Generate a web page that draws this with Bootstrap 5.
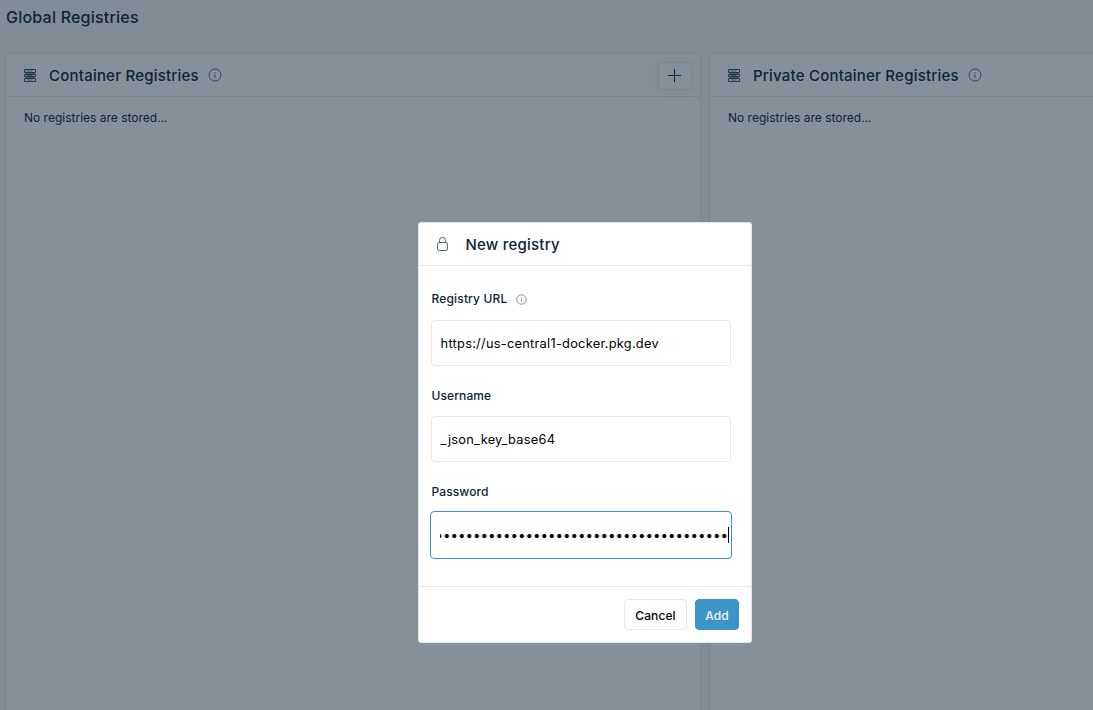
<!DOCTYPE html>
<html lang="en">
<head>
<meta charset="utf-8">
<meta name="viewport" content="width=device-width, initial-scale=1">
<title>Global Registries</title>
<link href="https://cdn.jsdelivr.net/npm/bootstrap@5.3.0/dist/css/bootstrap.min.css" rel="stylesheet">
<style>
body{font-family:Inter,sans-serif;font-size:12px;line-height:18px;color:#0d2436;background:#808d96;height:710px}
.page-title{font-size:16px;font-weight:450;line-height:20px;letter-spacing:.22px;padding:7px 0 0 6px;height:53px}
.boards{padding-left:5px;gap:8px;height:657px}
.panel{width:696px;background:#84919a;border:1px solid #7a8790;border-bottom:0;border-radius:5px 5px 0 0}
.panel-last{width:auto;min-width:0;border-right:0;border-top-right-radius:0}
.panel-top{height:43px;border-bottom:1px solid #7a8790;padding:0 8px 0 18px}
.panel-title,.dialog-title{font-size:15px;font-weight:450;line-height:20px;letter-spacing:.22px}
.panel-title{margin-left:13px;padding-top:1px}
.panel-text{padding:12px 18px}
.add-btn{width:34px;height:28px;border:1px solid #7a8790;border-radius:3px;box-shadow:0 0 14px rgba(30,50,65,.07);background:#84919a;margin-top:1px}
.add-btn svg{margin-right:1px}
svg{display:block;flex:none}
.info-lg{color:#33495a;margin-left:9px}
.info-sm{color:#657581;margin-left:9px}
.dialog{position:absolute;left:418px;top:222px;width:334px;height:421px;background:#fff;border:1px solid #e3e6e8;border-radius:3px}
.dialog-top{height:43px;border-bottom:1px solid #e6e8ea;padding-left:16px}
.dialog-title{margin-left:15.5px;padding-top:2px}
.dialog-main{height:321px;padding:24px 20px 0 12px;border-bottom:1px solid #e6e8ea}
.field-label{font-weight:450;line-height:18px;height:18px;margin:0 0 11px .6px;letter-spacing:.08px}
.field-label.with-info{margin-bottom:12px;letter-spacing:.14px}
.field{height:46px;width:300px;border:1px solid #e6e8ea;border-radius:4px;font-size:12.8px;letter-spacing:.27px;color:#000;padding:1px 9px 0 8.6px;margin-bottom:21px;background:#fff}
.field.active{width:302px;height:48px;margin:-1px 0 0 -1px;border-color:#3d94c7;padding:0 2px 0 9px;font-size:13.333px;letter-spacing:0}
.dots{overflow:hidden;white-space:nowrap;height:18px;width:288px}
.caret{width:1px;height:16px;background:#000}
.act{height:31px;border-radius:4px;font-size:12px;font-weight:450;padding:2px 0 0;border:1px solid #e6e8ea;color:#000;letter-spacing:.1px}
.act-cancel{width:63px}
.act-add{width:44px;background:#3d94c7;border-color:#3d94c7;color:#eef5fa}
</style>
</head>
<body class="overflow-hidden position-relative">
<svg width="0" height="0" class="position-absolute">
<symbol id="rack" viewBox="0 0 12 13"><g fill="none" stroke="#203748"><path d="M.5 .5h11v3H.5zM.5 5.5h11v2H.5zM.5 9.5h11v3H.5z"/><path d="M1 4.5h10M1 8.5h10M2.5 2h6M2.5 6.5h6M2.5 11h6" stroke-opacity=".6"/></g></symbol>
<symbol id="info" viewBox="0 0 14 14"><g fill="none" stroke="currentColor"><circle cx="7" cy="7" r="6"/><path d="M7 6v4M7 4v1"/></g></symbol>
</svg>
<h1 class="page-title m-0">Global Registries</h1>
<main class="boards d-flex">
<section class="panel flex-shrink-0">
<div class="panel-top d-flex align-items-center"><svg width="12" height="13"><use href="#rack"/></svg><h2 class="panel-title mb-0">Container Registries</h2><svg class="info-lg" width="14" height="14"><use href="#info"/></svg>
<button class="btn add-btn p-0 ms-auto d-flex align-items-center justify-content-center" aria-label="Add registry"><svg width="13" height="13"><path d="M6.5 0v13M0 6.5h13" stroke="#0b2234"/></svg></button></div>
<div class="panel-text">No registries are stored...</div>
</section>
<section class="panel panel-last flex-grow-1">
<div class="panel-top d-flex align-items-center"><svg width="12" height="13"><use href="#rack"/></svg><h2 class="panel-title mb-0">Private Container Registries</h2><svg class="info-lg" width="14" height="14"><use href="#info"/></svg></div>
<div class="panel-text">No registries are stored...</div>
</section>
</main>
<div class="dialog" role="dialog" aria-label="New registry">
<div class="dialog-top d-flex align-items-center"><svg width="15" height="16" viewBox="0 0 15 16"><g fill="none" stroke="#536473"><rect x="2.5" y="6.5" width="10" height="8" rx="1.7"/><path d="M4.5 6.5V4.4a3 3 0 0 1 6 0v2.1"/></g></svg><h2 class="dialog-title mb-0">New registry</h2></div>
<div class="dialog-main">
<div class="field-label with-info d-flex align-items-center">Registry URL<svg class="info-sm" width="11" height="11" viewBox="0 0 14 14"><use href="#info"/></svg></div>
<div class="field d-flex align-items-center">https://us-central1-docker.pkg.dev</div>
<div class="field-label">Username</div>
<div class="field d-flex align-items-center">_json_key_base64</div>
<div class="field-label">Password</div>
<div class="field active d-flex align-items-center"><div class="dots d-flex justify-content-end"><span>•••••••••••••••••••••••••••••••••••••••</span></div><span class="caret"></span></div>
</div>
<div class="d-flex justify-content-end gap-2 pt-2 mt-1 pe-2 me-1"><button class="btn act act-cancel">Cancel</button><button class="btn act act-add">Add</button></div>
</div>
<script src="https://cdn.jsdelivr.net/npm/bootstrap@5.3.0/dist/js/bootstrap.bundle.min.js"></script>
</body>
</html>
